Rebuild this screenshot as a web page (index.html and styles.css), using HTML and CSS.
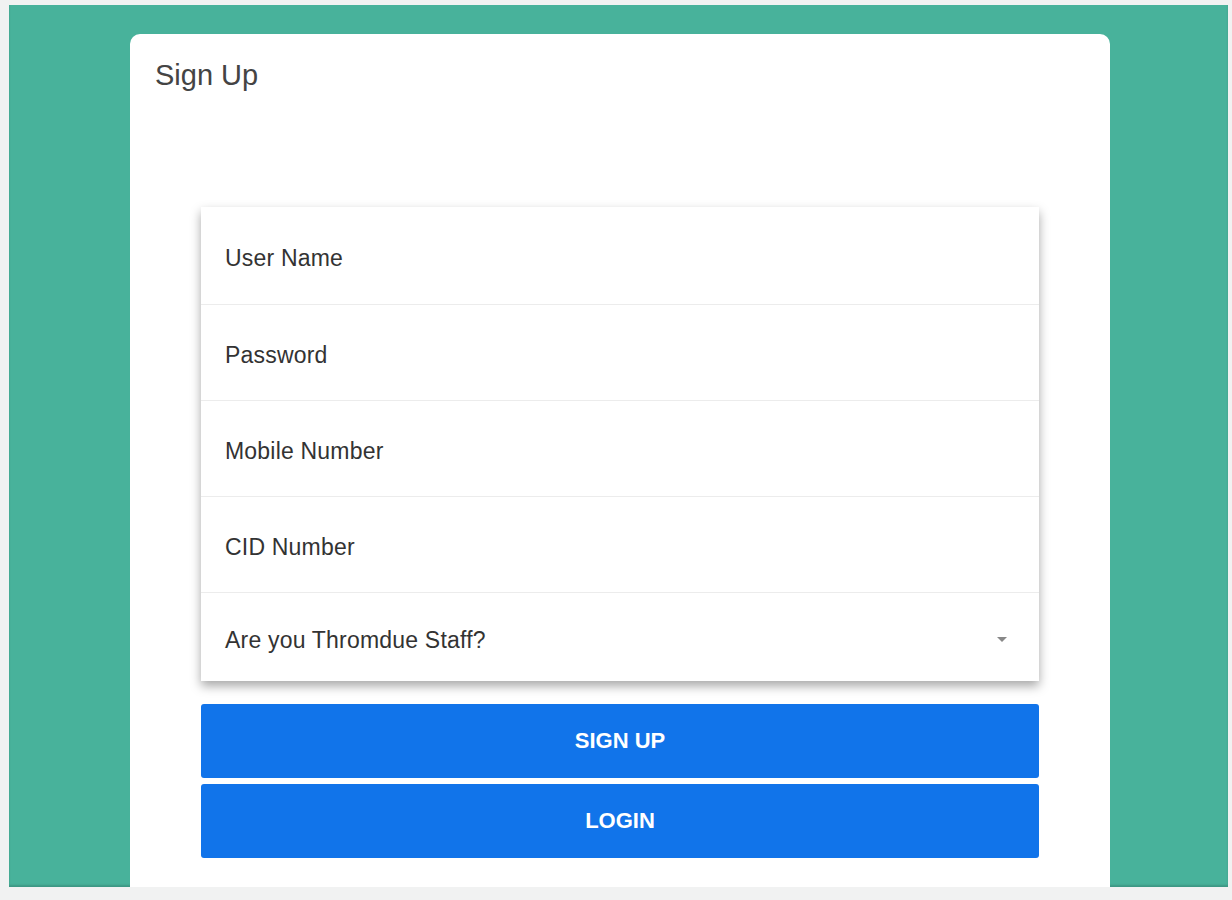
FILE: index.html
```html
<!DOCTYPE html>
<html lang="en">
<head>
    <meta charset="UTF-8">
    <meta name="viewport" content="width=device-width, initial-scale=1.0">
    <title>Sign Up</title>
    <link rel="stylesheet" href="styles.css">
</head>
<body>

    <div class="frame">
        <div class="card">
            <h1>Sign Up</h1>

            <div class="form-panel">
                <div class="field first"><span>User Name</span></div>
                <div class="field"><span>Password</span></div>
                <div class="field"><span>Mobile Number</span></div>
                <div class="field"><span>CID Number</span></div>
                <div class="field select">
                    <span>Are you Thromdue Staff?</span>
                    <span class="arrow"></span>
                </div>
            </div>

            <div class="actions">
                <button>SIGN UP</button>
                <button>LOGIN</button>
            </div>
        </div>
    </div>

</body>
</html>
```

FILE: styles.css
```css
* {
    margin: 0;
    padding: 0;
    box-sizing: border-box;
}

body {
    font-family: 'Liberation Sans', Arial, sans-serif;
    background-color: #f1f2f2;
    padding: 5px 4px 0 9px;
    height: 100vh;
    overflow: hidden;
}

.frame {
    background-color: #48b29b;
    height: 882px;
    overflow: hidden;
    padding: 29px 0 0 121px;
    box-shadow: inset 0 -2px 2px rgba(0, 0, 0, 0.15);
}

.card {
    background-color: #fff;
    width: 980px;
    height: 900px;
    border-radius: 10px 10px 0 0;
}

h1 {
    font-weight: 400;
    font-size: 29px;
    color: #444;
    padding: 25px 0 0 25px;
    height: 173px;
}

.form-panel {
    margin-left: 71px;
    width: 838px;
    background-color: #fff;
    box-shadow: 0 5px 10px rgba(0, 0, 0, 0.35);
}

.field {
    height: 96px;
    display: flex;
    align-items: center;
    padding: 6px 24px 0;
    font-size: 23px;
    letter-spacing: 0.2px;
    color: #333;
    border-bottom: 1px solid #ececec;
}

.field.first {
    height: 98px;
}

.field.select {
    height: 88px;
    border-bottom: none;
    justify-content: space-between;
    padding-right: 32px;
}

.arrow {
    width: 0;
    height: 0;
    margin-top: -2px;
    border-left: 5px solid transparent;
    border-right: 5px solid transparent;
    border-top: 5px solid #888;
}

.actions {
    margin: 23px 0 0 71px;
    width: 838px;
    display: flex;
    flex-direction: column;
    gap: 6px;
}

button {
    height: 74px;
    background-color: #1174ea;
    color: #fff;
    font-family: 'Liberation Sans', Arial, sans-serif;
    font-weight: 700;
    font-size: 22px;
    border: none;
    border-radius: 3px;
    cursor: pointer;
}
```
